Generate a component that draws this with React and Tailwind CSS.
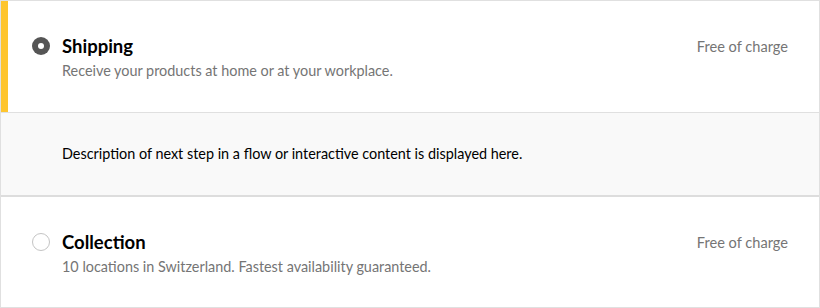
import React, { useState } from "react";

const options = [
  {
    id: "shipping",
    title: "Shipping",
    subtitle: "Receive your products at home or at your workplace.",
    price: "Free of charge",
    detail: "Description of next step in a flow or interactive content is displayed here.",
  },
  {
    id: "collection",
    title: "Collection",
    subtitle: "10 locations in Switzerland. Fastest availability guaranteed.",
    price: "Free of charge",
  },
];

const Radio = ({ checked }) =>
  checked ? (
    <span className="flex h-[18px] w-[18px] items-center justify-center rounded-full bg-[#555555]">
      <span className="block h-[6px] w-[6px] rounded-full bg-white" />
    </span>
  ) : (
    <span className="block h-[18px] w-[18px] rounded-full border border-[#c4c4c4] bg-white" />
  );

export default function App() {
  const [selected, setSelected] = useState("shipping");

  return (
    <div className="h-[308px] w-[820px] border border-[#e0e0e0] bg-white font-['Lato',sans-serif] text-black">
      {options.map((opt) => {
        const active = selected === opt.id;
        return (
          <div key={opt.id}>
            <button
              type="button"
              onClick={() => setSelected(opt.id)}
              className={`flex w-full items-start gap-[12px] pr-[31px] text-left ${
                active
                  ? "h-[111px] border-l-[7px] border-[#fec52e] pl-[24px] pt-[34px]"
                  : "h-[110px] pl-[31px] pt-[34px]"
              }`}
            >
              <span className="mt-[2px] block shrink-0">
                <Radio checked={active} />
              </span>
              <span className="block flex-1">
                <span className="block text-[18.5px] font-bold leading-[22px]">{opt.title}</span>
                <span className="mt-[4px] block text-[14.4px] leading-[20px] text-[#757575]">
                  {opt.subtitle}
                </span>
              </span>
              <span className="mt-[1px] block text-[14.6px] leading-[22px] text-[#757575]">{opt.price}</span>
            </button>
            {active && opt.detail && (
              <div className="flex h-[85px] items-center border-y border-t-[#e0e0e0] border-b-[2px] border-b-[#dddddd] bg-[#f9f9f9] pl-[61px] text-[14.4px]">
                {opt.detail}
              </div>
            )}
          </div>
        );
      })}
    </div>
  );
}
